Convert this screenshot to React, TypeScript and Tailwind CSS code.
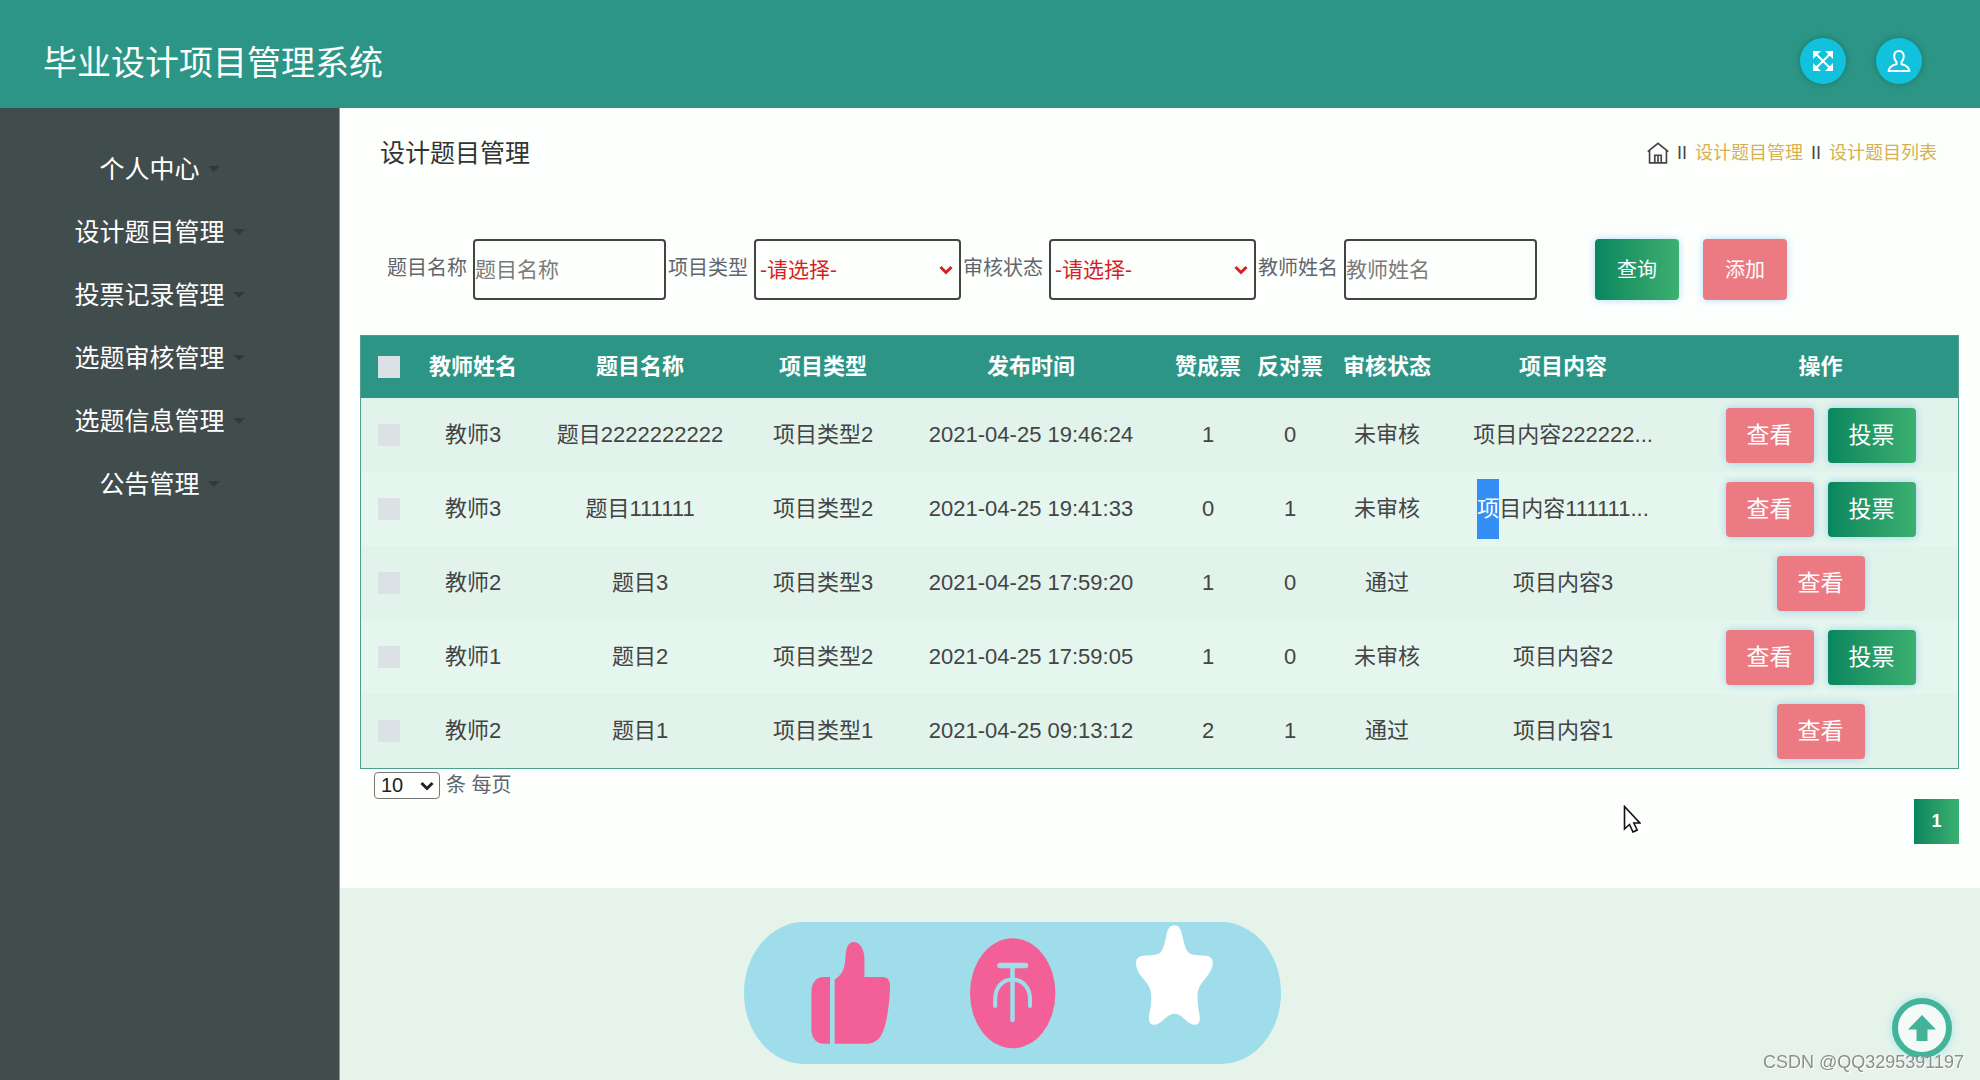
import { useState } from "react";

const menu = [
  "个人中心",
  "设计题目管理",
  "投票记录管理",
  "选题审核管理",
  "选题信息管理",
  "公告管理",
];

const columns = [
  { title: "教师姓名", width: "w-[112px]" },
  { title: "题目名称", width: "w-[222px]" },
  { title: "项目类型", width: "w-[144px]" },
  { title: "发布时间", width: "w-[272px]" },
  { title: "赞成票", width: "w-[82px]" },
  { title: "反对票", width: "w-[82px]" },
  { title: "审核状态", width: "w-[112px]" },
  { title: "项目内容", width: "w-[240px]" },
  { title: "操作", width: "w-[275px]" },
];

type Topic = {
  teacher: string;
  name: string;
  type: string;
  time: string;
  up: number;
  down: number;
  status: string;
  content: string;
  marked?: number;
};

const topics: Topic[] = [
  { teacher: "教师3", name: "题目2222222222", type: "项目类型2", time: "2021-04-25 19:46:24", up: 1, down: 0, status: "未审核", content: "项目内容222222..." },
  { teacher: "教师3", name: "题目111111", type: "项目类型2", time: "2021-04-25 19:41:33", up: 0, down: 1, status: "未审核", content: "项目内容111111...", marked: 1 },
  { teacher: "教师2", name: "题目3", type: "项目类型3", time: "2021-04-25 17:59:20", up: 1, down: 0, status: "通过", content: "项目内容3" },
  { teacher: "教师1", name: "题目2", type: "项目类型2", time: "2021-04-25 17:59:05", up: 1, down: 0, status: "未审核", content: "项目内容2" },
  { teacher: "教师2", name: "题目1", type: "项目类型1", time: "2021-04-25 09:13:12", up: 2, down: 1, status: "通过", content: "项目内容1" },
];

const ExpandIcon = () => (
  <svg viewBox="0 0 24 24" className="w-6 h-6" fill="none" stroke="currentColor" strokeWidth="2">
    <path d="M4 4l16 16M20 4L4 20" />
    <path d="M2 2h8L2 10zM22 2v8l-8-8zM2 22v-8l8 8zM22 22h-8l8-8z" fill="currentColor" stroke="none" />
  </svg>
);

const UserIcon = () => (
  <svg viewBox="0 0 24 24" className="w-6 h-6" fill="none" stroke="currentColor" strokeWidth="2" strokeLinejoin="round">
    <path d="M12 2C8.800 2 7.200 4.400 7.200 7.300c0 2.400.900 4.300 2.300 5.600v2.300c-3.900.800-7.300 2.400-8 6.800h21c-.7-4.400-4.100-6-8-6.800v-2.300c1.400-1.300 2.300-3.200 2.300-5.600C16.800 4.400 15.200 2 12 2z" />
  </svg>
);

const HomeIcon = () => (
  <svg viewBox="0 0 24 24" className="w-[22px] h-[22px]" fill="none" stroke="currentColor" strokeWidth="1.800">
    <path d="M.8 10.500L12 1.500l11.200 9M2.800 9.500v13.300h18.400V9.500" />
    <path d="M8.500 22.500v-8h7v8M12 14.500v8" />
  </svg>
);

const Chevron = ({ className }: { className: string }) => (
  <svg viewBox="0 0 14 10" className={className} fill="none" stroke="currentColor" strokeWidth="3">
    <path d="M1.500 2L7 7.500 12.500 2" />
  </svg>
);

const TextFilter = ({ id, label }: { id: string; label: string }) => (
  <div className="flex items-center gap-1.5">
    <label htmlFor={id} className="pb-1 text-[20px] leading-6 text-[#5f666d] whitespace-nowrap">
      {label}
    </label>
    <input
      id={id}
      placeholder={label}
      className="w-[193px] h-[61px] rounded border-2 border-[#444] text-[21px] placeholder:text-[#7b7b7b]"
    />
  </div>
);

const SelectFilter = ({ id, label }: { id: string; label: string }) => (
  <div className="flex items-center gap-1.5">
    <label htmlFor={id} className="pb-1 text-[20px] leading-6 text-[#5f666d] whitespace-nowrap">
      {label}
    </label>
    <div className="relative text-[#d61f26]">
      <select
        id={id}
        className="appearance-none w-[207px] h-[61px] rounded border-2 border-[#444] pl-1 text-[21px]"
      >
        <option>-请选择-</option>
      </select>
      <Chevron className="absolute right-2 top-[26px] w-[14px] h-[10px] pointer-events-none" />
    </div>
  </div>
);

const Content = ({ text, marked = 0 }: { text: string; marked?: number }) => (
  <>
    {marked > 0 && (
      <span className="inline-block bg-[#338ff5] text-white leading-[60px]">{text.slice(0, marked)}</span>
    )}
    {text.slice(marked)}
  </>
);

const ViewButton = () => (
  <button className="w-[88px] h-[55px] rounded bg-[#ec7a82] text-white text-[23px] shadow-[0_0_8px_#9fd3ee]">
    查看
  </button>
);

const VoteButton = () => (
  <button className="w-[88px] h-[55px] rounded bg-linear-to-r from-[#07865f] to-[#3bb070] text-white text-[23px] shadow-[0_0_8px_#9fd3ee]">
    投票
  </button>
);

const Badges = () => (
  <svg viewBox="0 0 537 142" className="w-[537px] h-[142px]">
    <rect width="537" height="142" rx="60" ry="71" fill="#9fddeb" />
    <g fill="#f26097">
      <path d="M86 55h-6c-8 0-12.600 6-12.600 15v37c0 9 4.600 14.700 12.600 14.700h6z" />
      <path d="M90.700 57.500c7-5 9.300-8.500 10.600-19.500.600-10 1.700-18 8.200-18 7 0 10.900 8 10.900 17v18h17c6 0 8.600 2.500 8.600 8.500 0 13-2 29-5 40-3.500 13-9 18.200-19 18.200H90.700z" />
      <ellipse cx="268.700" cy="71.300" rx="42.700" ry="55" />
    </g>
    <g fill="none" stroke="#9fddeb" strokeLinecap="round">
      <path d="M256 43.500h25.500" strokeWidth="5.500" />
      <path d="M268.500 44v54" strokeWidth="4.500" />
      <path d="M251.200 84V77c0-11 7-19.500 17.300-19.500S286 66 286 77v7" strokeWidth="4" />
    </g>
    <path
      fill="#fff"
      d="M430.300 3.300c-5 0-6.800 4-8.200 11-1.700 9-3.600 16-8 17.700-4 1.500-10 1-15 1.800-5.500.800-7.500 4-7 9 .8 8.200 7.400 13.700 11.400 19.200 4.500 6.500 4 14 3.300 22-.7 6-2.400 9-1.700 14.500.6 4.500 5.200 5.500 9.500 3 5.500-3.200 9.500-9.700 16-9.700s10 6.500 15.500 9.700c4.300 2.500 9 1.500 9.500-3 .600-5.500-1-8.500-1.500-14.500-.8-8-1.500-15.500 3-22 4-5.500 10-11 11.600-19.200.8-5-1.500-8.200-7-9-5-.800-11-.3-15-1.800-4.400-1.700-6.500-8.700-8.200-17.700-1.400-7-3.200-11-8.200-11z"
    />
  </svg>
);

const Pointer = () => (
  <svg viewBox="0 0 18 28" className="absolute left-[78%] top-[697px] ml-1 w-[18px] h-7 pointer-events-none">
    <path d="M1.500 1.500v22.500l5-4.500 3.500 7.500 4.200-2-3.400-7h6z" fill="#fff" stroke="#111" strokeWidth="1.600" />
  </svg>
);

export default function App() {
  const [size, setSize] = useState("10");

  return (
    <div className="min-h-screen flex flex-col font-['Liberation_Sans','Noto_Sans_CJK_SC',sans-serif] text-[#444]">
      <header className="flex items-center justify-between h-[108px] pt-[18px] pl-[43px] pr-[58px] bg-[#2d9585] text-white">
        <h1 className="text-[34px] leading-10">毕业设计项目管理系统</h1>
        <div className="flex gap-[30px]">
          <button aria-label="全屏" className="flex items-center justify-center w-[46px] h-[46px] mb-1 rounded-full bg-[#12c2dc] shadow-[0_0_6px_#14776c]">
            <ExpandIcon />
          </button>
          <button aria-label="用户" className="flex items-center justify-center w-[46px] h-[46px] mb-1 rounded-full bg-[#12c2dc] shadow-[0_0_6px_#14776c]">
            <UserIcon />
          </button>
        </div>
      </header>

      <div className="flex flex-1">
        <nav className="w-[340px] shrink-0 pt-[29px] pr-5 bg-[#414c4d] border-r border-[#8f9696]">
          {menu.map((item) => (
            <a key={item} href="#" className="flex items-center justify-center gap-2 h-[63px] text-[25px] leading-8 text-white">
              {item}
              <span className="border-x-6 border-t-6 border-x-transparent border-t-[#303a3b]" />
            </a>
          ))}
        </nav>

        <main className="flex flex-col flex-1 min-w-0 bg-[#e6f3eb]">
          <section className="relative pl-5 pr-[21px] pb-11 bg-[#fdfffd]">
            <div className="flex items-center justify-between h-[90px] pl-5 pr-[22px]">
              <h2 className="text-[25px] leading-8 text-[#333]">设计题目管理</h2>
              <div className="flex items-center gap-2 text-[18px] leading-6">
                <a href="#" aria-label="首页">
                  <HomeIcon />
                </a>
                <span>II</span>
                <a href="#" className="text-[#d6b04e]">设计题目管理</a>
                <span>II</span>
                <a href="#" className="text-[#d6b04e]">设计题目列表</a>
              </div>
            </div>

            <form className="flex items-center mt-[41px] pl-[27px]" onSubmit={(e) => e.preventDefault()}>
              <div className="flex items-center gap-0.5">
                <TextFilter id="name" label="题目名称" />
                <SelectFilter id="type" label="项目类型" />
                <SelectFilter id="status" label="审核状态" />
                <TextFilter id="teacher" label="教师姓名" />
              </div>
              <div className="flex gap-6 ml-[58px]">
                <button className="w-[84px] h-[61px] rounded bg-linear-to-r from-[#07865f] to-[#3bb070] text-white text-[20px] shadow-[0_0_8px_#b5dcf5]">
                  查询
                </button>
                <button type="button" className="w-[84px] h-[61px] rounded bg-[#ec7a82] text-white text-[20px] shadow-[0_0_8px_#b5dcf5]">
                  添加
                </button>
              </div>
            </form>

            <div className="mt-[35px] border border-[#4f9e8f]">
              <table className="w-full table-fixed text-center text-[22px] leading-8">
                <thead className="bg-[#2d9585] text-white">
                  <tr className="h-[62px]">
                    <th className="w-[56px]">
                      <input type="checkbox" aria-label="全选" className="block mx-auto appearance-none w-[22px] h-[22px] bg-[#dbe1e4]" />
                    </th>
                    {columns.map((c) => (
                      <th key={c.title} className={c.width}>{c.title}</th>
                    ))}
                  </tr>
                </thead>
                <tbody>
                  {topics.map((t) => (
                    <tr key={t.time} className="h-[74px] odd:bg-[#e2f3eb] even:bg-[#e5f6ee]">
                      <td>
                        <input type="checkbox" aria-label={t.name} className="block mx-auto appearance-none w-[22px] h-[22px] bg-[#dbe1e4]" />
                      </td>
                      <td>{t.teacher}</td>
                      <td>{t.name}</td>
                      <td>{t.type}</td>
                      <td>{t.time}</td>
                      <td>{t.up}</td>
                      <td>{t.down}</td>
                      <td>{t.status}</td>
                      <td>
                        <Content text={t.content} marked={t.marked} />
                      </td>
                      <td>
                        <div className="flex justify-center gap-3.5">
                          <ViewButton />
                          {t.status === "未审核" && <VoteButton />}
                        </div>
                      </td>
                    </tr>
                  ))}
                </tbody>
              </table>
            </div>

            <div className="flex items-center gap-1.5 mt-0.5 pl-3.5 text-[20px] leading-7 text-[#5f666d]">
              <div className="relative flex text-[#222]">
                <select
                  id="size"
                  value={size}
                  onChange={(e) => setSize(e.target.value)}
                  className="appearance-none w-[66px] h-[27px] rounded-sm border border-[#777] pl-1.5 leading-6"
                >
                  <option>10</option>
                  <option>25</option>
                  <option>50</option>
                </select>
                <Chevron className="absolute right-1.5 top-[9px] w-[14px] h-[10px] pointer-events-none" />
              </div>
              <label htmlFor="size">条 每页</label>
            </div>

            <div className="flex justify-end">
              <button className="w-[45px] h-[45px] bg-linear-to-r from-[#07865f] to-[#3bb070] text-white text-[18px] font-bold">
                1
              </button>
            </div>
            <Pointer />
          </section>

          <footer className="flex justify-center flex-1 pt-[34px] pb-3 pr-[18%]">
            <Badges />
          </footer>
        </main>
      </div>

      <button
        aria-label="返回顶部"
        className="fixed right-7 bottom-[22px] flex items-center justify-center w-[60px] h-[60px] rounded-full border-6 border-[#43b399] bg-[#f4faf8] text-[#43b399] shadow-[0_0_8px_#a5e3e6]"
      >
        <svg viewBox="0 0 28 28" className="w-7 h-7" fill="currentColor">
          <path d="M14 1L28 15.500h-8.500V27h-11V15.500H0z" />
        </svg>
      </button>
      <p className="fixed right-4 bottom-1.5 text-[18px] leading-6 text-[#8a8f8c] text-shadow-[1px_1px_0_#fff]">
        CSDN @QQ3295391197
      </p>
    </div>
  );
}
